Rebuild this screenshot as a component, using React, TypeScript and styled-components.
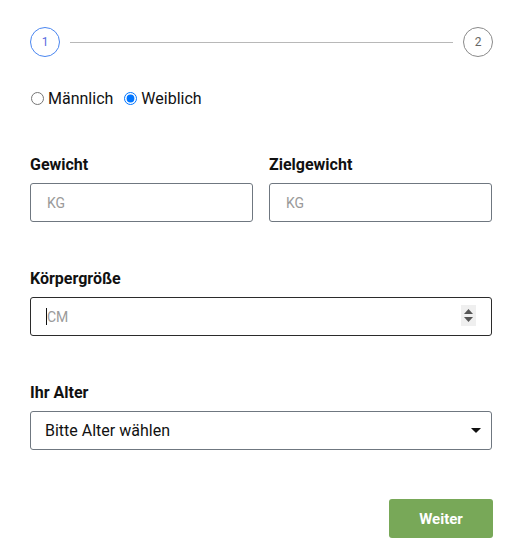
import React from 'react';
import styled, { createGlobalStyle } from 'styled-components';

const Global = createGlobalStyle`
  html, body {
    margin: 0;
    padding: 0;
    background: #fff;
    font-family: Roboto, "Liberation Sans", sans-serif;
    color: #111;
  }
  * { box-sizing: border-box; }
`;

const Page = styled.main`
  width: 521px;
  padding: 27px 29px 0 30px;
`;

const Stepper = styled.div`
  display: flex;
  align-items: center;
  gap: 10px;
  margin-right: -1px;
`;

const StepDot = styled.div<{ active?: boolean }>`
  width: 30px;
  height: 30px;
  flex: none;
  border-radius: 50%;
  border: 1px solid ${p => (p.active ? '#4a86f0' : '#8a8a8a')};
  color: ${p => (p.active ? '#5a6be0' : '#666')};
  display: flex;
  align-items: center;
  justify-content: center;
  font-size: 12px;
`;

const StepLine = styled.div`
  flex: 1;
  height: 1px;
  background: #b8b8b8;
`;

const GenderRow = styled.div`
  display: flex;
  align-items: center;
  margin-top: 32px;
  height: 19px;
  font-size: 16px;
  line-height: 19px;
`;

const RadioLabel = styled.label`
  display: flex;
  align-items: center;
  margin-right: 10px;

  input {
    margin: 0 4px 0 1px;
    width: 13px;
    height: 13px;
  }
`;

const Row = styled.div`
  display: grid;
  grid-template-columns: 1fr 1fr;
  gap: 16px;
  margin-top: 47px;
`;

const Field = styled.div<{ spaced?: boolean }>`
  display: flex;
  flex-direction: column;
  margin-top: ${p => (p.spaced ? '47px' : '0')};
`;

const Label = styled.label`
  font-size: 16px;
  font-weight: 700;
  line-height: 19px;
  margin-bottom: 9px;
`;

const InputWrap = styled.div`
  position: relative;
`;

const TextInput = styled.input<{ focused?: boolean }>`
  width: 100%;
  height: 39px;
  border: 1px solid ${p => (p.focused ? '#2b2b2b' : '#6f7780')};
  border-radius: 3px;
  padding: 0 16px;
  font-family: Roboto, "Liberation Sans", sans-serif;
  font-size: 14px;
  color: #222;
  outline: none;
  background: #fff;

  &::placeholder {
    color: #9a9a9a;
  }
`;

const Caret = styled.span`
  position: absolute;
  left: 16px;
  top: 11px;
  width: 1px;
  height: 17px;
  background: #111;
`;

const Spinner = styled.div`
  position: absolute;
  right: 16px;
  top: 8px;
  width: 15px;
  height: 21px;
  background: #efefef;
  display: flex;
  flex-direction: column;
  align-items: center;
  justify-content: center;
  gap: 3px;
`;

const Select = styled.select`
  width: 100%;
  height: 39px;
  appearance: none;
  border: 1px solid #6f7780;
  border-radius: 3px;
  padding: 0 14px;
  font-family: Roboto, "Liberation Sans", sans-serif;
  font-size: 16px;
  color: #111;
  background: #fff;
  outline: none;
`;

const SelectArrow = styled.svg`
  position: absolute;
  right: 11px;
  top: 17px;
  pointer-events: none;
`;

const Actions = styled.div`
  display: flex;
  justify-content: flex-end;
  margin-top: 49px;
  margin-right: -1px;
`;

const NextButton = styled.button`
  width: 104px;
  height: 39px;
  border: none;
  border-radius: 3px;
  background: #78a858;
  color: #fff;
  font-family: Roboto, "Liberation Sans", sans-serif;
  font-size: 15px;
  font-weight: 700;
`;

export default function App() {
  return (
    <Page>
      <Global />
      <Stepper>
        <StepDot active>1</StepDot>
        <StepLine />
        <StepDot>2</StepDot>
      </Stepper>

      <GenderRow>
        <RadioLabel>
          <input type="radio" name="gender" />
          Männlich
        </RadioLabel>
        <RadioLabel>
          <input type="radio" name="gender" defaultChecked />
          Weiblich
        </RadioLabel>
      </GenderRow>

      <Row>
        <Field>
          <Label>Gewicht</Label>
          <TextInput placeholder="KG" />
        </Field>
        <Field>
          <Label>Zielgewicht</Label>
          <TextInput placeholder="KG" />
        </Field>
      </Row>

      <Field spaced>
        <Label>Körpergröße</Label>
        <InputWrap>
          <TextInput focused placeholder="CM" />
          <Caret />
          <Spinner>
            <svg width="9" height="5" viewBox="0 0 9 5">
              <path d="M4.5 0 L9 5 L0 5 Z" fill="#555" />
            </svg>
            <svg width="9" height="5" viewBox="0 0 9 5">
              <path d="M0 0 L9 0 L4.5 5 Z" fill="#555" />
            </svg>
          </Spinner>
        </InputWrap>
      </Field>

      <Field spaced>
        <Label>Ihr Alter</Label>
        <InputWrap>
          <Select defaultValue="">
            <option value="">Bitte Alter wählen</option>
          </Select>
          <SelectArrow width="10" height="5" viewBox="0 0 10 5">
            <path d="M0.6 0 H9.4 Q10 0 9.6 0.5 L5.5 4.6 Q5 5 4.5 4.6 L0.4 0.5 Q0 0 0.6 0 Z" fill="#111" />
          </SelectArrow>
        </InputWrap>
      </Field>

      <Actions>
        <NextButton>Weiter</NextButton>
      </Actions>
    </Page>
  );
}
